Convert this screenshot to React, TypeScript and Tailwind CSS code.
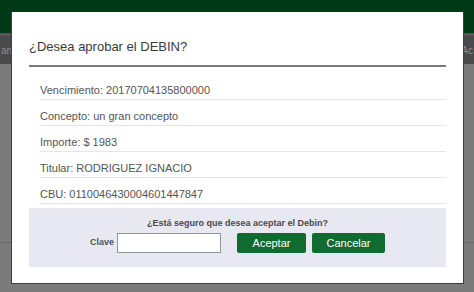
import { useState } from "react";

const rows = [
  "Vencimiento: 20170704135800000",
  "Concepto: un gran concepto",
  "Importe: $ 1983",
  "Titular: RODRIGUEZ IGNACIO",
  "CBU: 0110046430004601447847",
];

const App = () => {
  const [clave, setClave] = useState("");

  return (
    <div
      className="relative w-[474px] h-[292px] overflow-hidden bg-[#7b7b7b]"
      style={{ fontFamily: '"Liberation Sans", Arial, sans-serif' }}
    >
      {/* Page behind the overlay */}
      <div className="h-[33px] bg-[#023a17]" />
      <div className="h-[31px] bg-[#4a4a4c] border-t-[3px] border-[#565658] flex items-center justify-between px-[1px] text-[10px] text-[#8e8e92]">
        <span>an</span>
        <span>Ac</span>
      </div>
      <div className="h-[179px] border-b border-[#6a6a6a]" />

      {/* Modal */}
      <div className="absolute left-[11px] top-[12px] w-[453px] h-[272px] bg-white border border-[#3e3e3e] border-t-0 px-[17px]">
        <div className="pt-[27px] pb-[10px] border-b-2 border-[#7a7a7a]">
          <h2 className="text-[13px] leading-[16px] text-[#3a3a3a]">
            ¿Desea aprobar el DEBIN?
          </h2>
        </div>

        <div className="mt-[7px] ml-[11px]">
          {rows.map((row) => (
            <div
              key={row}
              className="h-[26px] pt-[9px] border-b border-[#e6e6e6] text-[11px] leading-[14px] text-[#555]"
            >
              {row}
            </div>
          ))}
        </div>

        <div className="mt-[4px] h-[59px] bg-[#e7e8f1] flex flex-col items-center pt-[9px]">
          <p className="text-[9px] leading-[13px] font-bold text-[#4a4a4a]">
            ¿Está seguro que desea aceptar el Debin?
          </p>
          <div className="mt-[3px] flex items-center">
            <label className="text-[9px] font-bold text-[#555] mr-[3px]">Clave</label>
            <input
              value={clave}
              onChange={(e) => setClave(e.target.value)}
              type="password"
              className="w-[104px] h-[20px] bg-white border border-[#8c9a92] outline-none px-1 text-[11px]"
            />
            <button className="ml-[16px] w-[69px] h-[20px] rounded-[2px] bg-[#116a30] text-white text-[11px]">
              Aceptar
            </button>
            <button className="ml-[6px] w-[73px] h-[20px] rounded-[2px] bg-[#116a30] text-white text-[11px]">
              Cancelar
            </button>
          </div>
        </div>
      </div>
    </div>
  );
};

export default App;
